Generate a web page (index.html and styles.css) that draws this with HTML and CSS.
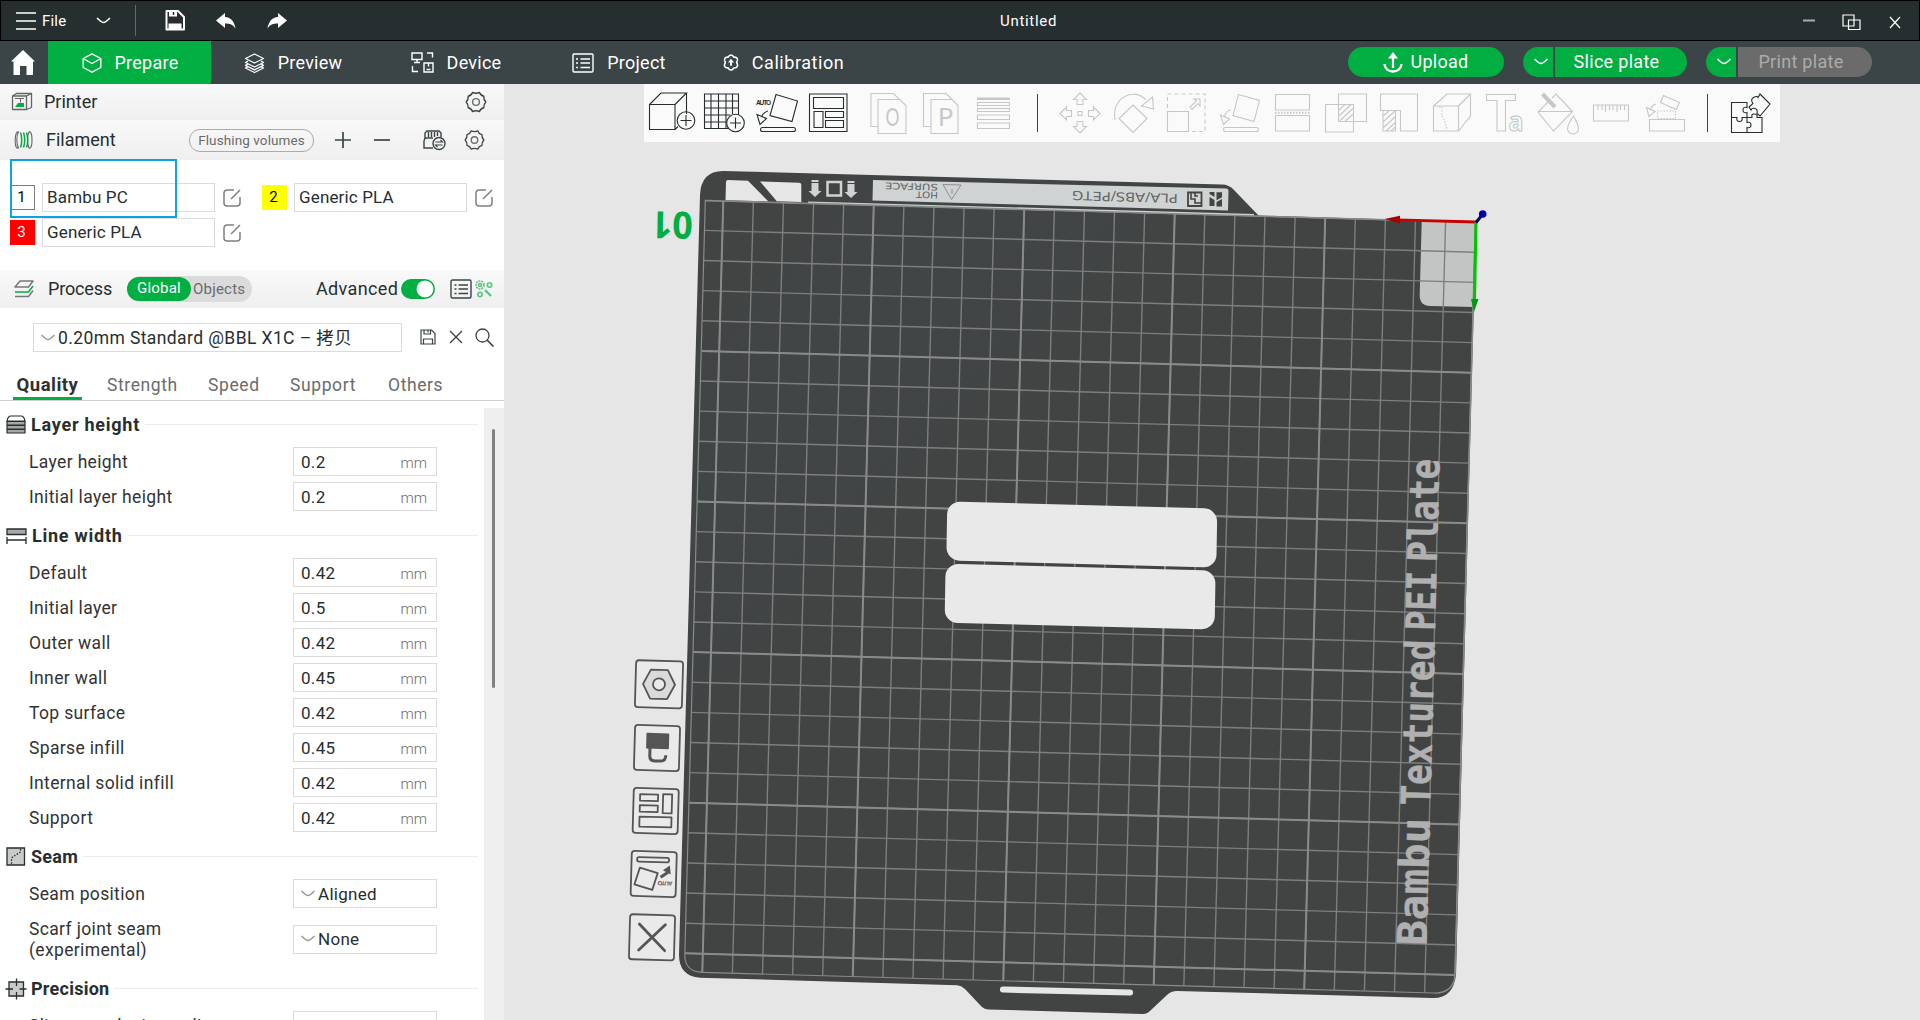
FILE: index.html
```
<!DOCTYPE html>
<html lang="en">
<head>
<meta charset="utf-8">
<title>Untitled</title>
<link rel="stylesheet" href="styles.css">
</head>
<body>
<svg class="defs" width="0" height="0" aria-hidden="true">
  <symbol id="edit" viewBox="0 0 18 18"><path d="M11 1H4a3 3 0 0 0-3 3v10a3 3 0 0 0 3 3h10a3 3 0 0 0 3-3V8M8 10l9-9" fill="none" stroke="#808080" stroke-width="1.5"/></symbol>
  <symbol id="gear" viewBox="0 0 22 22"><path d="M7.500 1.500Q11 3 14.500 1.500 15.500 4.500 18.800 5.300 18.500 8.500 20.800 11 18.500 13.500 18.800 16.700 15.500 17.500 14.500 20.500 11 19 7.500 20.500 6.500 17.500 3.200 16.700 3.500 13.500 1.200 11 3.500 8.500 3.200 5.300 6.500 4.500 7.500 1.500z" fill="none" stroke="#3b4446" stroke-width="1.400" stroke-linejoin="round"/><circle cx="11" cy="11" r="3.400" fill="none" stroke="#6b6b6b" stroke-width="1.400"/></symbol>
  <symbol id="down" viewBox="0 0 14 8"><path d="M.5 1q4.500 4.500 6.500 4.500T13.500 1" fill="none" stroke="currentColor" stroke-width="1.500"/></symbol>
</svg>

<header class="titlebar">
  <svg class="burger" width="20" height="18" viewBox="0 0 20 18"><path d="M0 1h20M0 9h20M0 17h20" stroke="#fff" stroke-width="1.600"/></svg>
  <span class="file">File</span>
  <svg class="file-down" width="15" height="8"><use href="#down"/></svg>
  <i class="rule"></i>
  <svg class="t-save" width="20" height="21" viewBox="0 0 20 21"><path d="M1.500 1h11.500l6 6v12.500h-17.500z" fill="none" stroke="#fff" stroke-width="2" stroke-linejoin="round"/><path d="M4 1h8v5.500H4zM3.500 13.500h13V20h-13z" fill="#fff"/><path d="M8.500 2v3" stroke="#262e30" stroke-width="1.500"/></svg>
  <svg class="t-undo" width="20" height="16" viewBox="0 0 20 16"><path d="M9 0v4c6 0 9.500 5 10.500 11.500C17 11.500 14 10.500 9 10.500v4.500L0 7.500z" fill="#fff"/></svg>
  <svg class="t-redo" width="20" height="16" viewBox="0 0 20 16"><path d="M11 0v4C5 4 1.500 9 .5 15.500 3 11.500 6 10.500 11 10.500v4.500l9-7.500z" fill="#fff"/></svg>
  <span class="doc">Untitled</span>
  <svg class="win" width="100" height="20" viewBox="0 0 100 20" fill="none" stroke="#fff" stroke-width="1.200"><path d="M0 9.500h12" stroke="#aaa" stroke-width="2"/><path d="M40 4h11v11H40zM45.500 9h11.500v9.500H45.500z"/><path d="M87 6l10 11M97 6L87 17"/></svg>
</header>

<nav class="tabbar">
  <div class="home"><svg width="24" height="25" viewBox="0 0 24 25"><path d="M12 0L24 11.500l-2 0V25h-6.500v-9H9v9H2.500V11.500H0z" fill="#fff"/></svg></div>
  <div class="tab active"><svg width="20" height="20" viewBox="0 0 20 20" fill="none" stroke="#fff" stroke-width="1.400" stroke-linejoin="round"><path d="M10 .8l8.800 4.700v9L10 19.200 1.200 14.500v-9zM1.200 5.500L10 10.500l8.800-5"/></svg><span>Prepare</span></div>
  <div class="tab"><svg width="21" height="20" viewBox="0 0 21 20" fill="none" stroke="#fff" stroke-width="1.300" stroke-linejoin="round"><path d="M10.500 1l9 4.500-9 4.500-9-4.500zM4 8.200L1.500 9.500l9 4.500 9-4.500L17 8.200M4 11L1.500 12.300l9 4.500 9-4.500L17 11M4 13.700L1.500 15l9 4.500 9-4.500-2.500-1.300"/></svg><span>Preview</span></div>
  <div class="tab"><svg width="23" height="21" viewBox="0 0 23 21" fill="none" stroke="#fff" stroke-width="1.400"><path d="M1 1h10v6.500H1zM6 7.500v2.500M3 10.500h6M16 1h5.500v4.500M1.500 14v5.500H7M13 11h9v9h-9zM15.500 17.500h4M17.500 11v3.500"/></svg><span>Device</span></div>
  <div class="tab"><svg width="22" height="20" viewBox="0 0 22 20" fill="none" stroke="#fff" stroke-width="1.400"><rect x="1" y="1" width="20" height="18" rx="1"/><path d="M8.500 6H18M8.500 10H18M8.500 14.500H18"/><path d="M4 6h2M4 10h2M4 14.500h2"/></svg><span>Project</span></div>
  <div class="tab"><svg width="16" height="17" viewBox="0 0 17 18" fill="none" stroke="#fff" stroke-width="1.700" stroke-linejoin="round"><path d="M5.500 3.300Q6.500 1 8.500 1t3 2.300q2.600-.3 3.600 1.400T14.500 9q1.600 2.600.6 4.300t-3.600 1.400Q10.500 17 8.500 17t-3-2.300q-2.600.3-3.600-1.400T2.500 9Q.9 6.400 1.900 4.700t3.600-1.400z"/><path d="M8.500 12.500V7" stroke-width="2"/><path d="M5.200 9L8.500 5 11.800 9z" fill="#fff" stroke="none"/></svg><span>Calibration</span></div>
  <div class="actions">
    <div class="btn upload"><svg width="20" height="21" viewBox="0 0 20 21"><path d="M1.500 12a8.500 7.500 0 0 0 17 0M10 16V5" fill="none" stroke="#fff" stroke-width="2.300"/><path d="M5 6.500L10 0l5 6.500z" fill="#fff"/></svg><span>Upload</span></div>
    <div class="split"><div class="cap"><svg width="14" height="8"><use href="#down"/></svg></div><div class="btn slice">Slice plate</div></div>
    <div class="split"><div class="cap"><svg width="14" height="8"><use href="#down"/></svg></div><div class="btn print">Print plate</div></div>
  </div>
</nav>

<main class="main">
  <aside class="side">
    <div class="bar printer">
      <svg width="22" height="20" viewBox="0 0 22 20"><path d="M1.500 4h14v13.500h-14zM1.500 4l4-2.500h15v14l-5 2M15.500 4l5-2.500" fill="none" stroke="#666" stroke-width="1.300" stroke-linejoin="round"/><path d="M4 15l3-4h6v4z" fill="#00ae42"/><path d="M4 6.500h9M9.500 6.500v4" stroke="#666" fill="none"/></svg>
      <span>Printer</span>
      <svg class="end" width="22" height="22"><use href="#gear"/></svg>
    </div>
    <div class="bar filament">
      <svg width="19" height="18" viewBox="0 0 19 18" fill="none" stroke="#00ae42" stroke-width="1.500"><path d="M6.500 1.500q2.500 7.500 0 15M9.500 1.500q2.500 7.500 0 15M12.500 1.500q2.500 7.500 0 15"/><path d="M4.500 1Q1.500 0 1.200 9t3.300 8Q2.800 14 2.800 9t1.700-8zM15 1q3-1 3 8t-3 8q-1.500-3-1.500-8T15 1z" stroke="#666" stroke-width="1.100"/></svg>
      <span>Filament</span>
      <div class="flush">Flushing volumes</div>
      <svg class="plus" width="16" height="16" viewBox="0 0 16 16"><path d="M0 8h16M8 0v16" stroke="#3b4446" stroke-width="1.700"/></svg>
      <svg class="minus" width="16" height="16" viewBox="0 0 16 16"><path d="M0 8h16" stroke="#3b4446" stroke-width="1.700"/></svg>
      <svg class="ams" width="23" height="20" viewBox="0 0 23 20" fill="none" stroke="#3b4446" stroke-width="1.400"><path d="M2 8V3l2-2h12l2 2v4M2 8L1 11v7h9M5.500 2v5M8.500 2v5M11.500 2v5M14.500 2v4M2 8h8"/><circle cx="16" cy="13.500" r="6"/><path d="M12.500 12h7l-2-2M19.500 15h-7l2 2" stroke-width="1.100"/></svg>
      <svg class="end2" width="21" height="22"><use href="#gear"/></svg>
    </div>
    <div class="spools">
      <div class="spool"><b class="sw white">1</b><div class="box">Bambu PC</div><svg width="18" height="18"><use href="#edit"/></svg></div>
      <div class="spool"><b class="sw yellow">2</b><div class="box">Generic PLA</div><svg width="18" height="18"><use href="#edit"/></svg></div>
      <div class="spool"><b class="sw red">3</b><div class="box">Generic PLA</div><svg width="18" height="18"><use href="#edit"/></svg></div>
      <div class="focus"></div>
    </div>
    <div class="bar process">
      <svg width="20" height="18" viewBox="0 0 20 18" fill="none" stroke="#777" stroke-width="1.500" stroke-linejoin="round"><path d="M6 1h13l-4.500 6H1z"/><path d="M1 12h13.500L19 6" stroke="#00ae42"/><path d="M1 16.500h13.500L19 10.500"/></svg>
      <span>Process</span>
      <div class="seg"><b>Global</b><i>Objects</i></div>
      <span class="adv">Advanced</span>
      <div class="toggle"></div>
      <svg class="list" width="22" height="20" viewBox="0 0 22 20" fill="none" stroke="#3b4446" stroke-width="1.400"><rect x="1" y="1" width="20" height="18" rx="1.500"/><path d="M8.500 6H18M8.500 10H18M8.500 14.500H18M4.500 6h2M4.500 10h2M4.500 14.500h2"/></svg>
      <svg width="18" height="18" viewBox="0 0 18 18" fill="none" stroke="#5cc483" stroke-width="1.600"><circle cx="5" cy="5" r="4" stroke-dasharray="2 .8"/><circle cx="5" cy="5" r="1.500"/><circle cx="14.500" cy="5" r="2.200"/><circle cx="5" cy="14.500" r="2.200"/><path d="M10 10l6 6" stroke-width="2.400"/></svg>
    </div>
    <div class="preset">
      <div class="box"><svg width="14" height="8"><use href="#down"/></svg><span>0.20mm Standard @BBL X1C – 拷贝</span></div>
      <svg class="p-save" width="16" height="16" viewBox="0 0 16 16" fill="none" stroke="#3b4446" stroke-width="1.200"><path d="M1 1h10.500L15 4.500V15H1zM4 1v4h6.500V1M3.500 15v-5h9v5M8 1.500v2"/></svg>
      <svg class="p-x" width="14" height="14" viewBox="0 0 14 14"><path d="M1 1l12 12M13 1L1 13" stroke="#3b4446" stroke-width="1.400"/></svg>
      <svg class="p-find" width="19" height="19" viewBox="0 0 19 19" fill="none" stroke="#3b4446" stroke-width="1.300"><circle cx="7.500" cy="7.500" r="6.500"/><path d="M12 12l6.500 6.500" stroke-width="1.700"/></svg>
    </div>
    <div class="subtabs"><b>Quality</b><span class="s2">Strength</span><span class="s3">Speed</span><span class="s4">Support</span><span class="s5">Others</span></div>
    <div class="settings">
      <div class="groups">
        <h3 class="wide"><svg width="20" height="19" viewBox="0 0 20 19" fill="#a7a7a7" stroke="#262e30" stroke-width="1.200"><path d="M1 6q1-5 4-5h10q3 0 4 5z" fill="#fff"/><path d="M1 6.500h18v3.500H1zM1 10.500h18V14H1zM1 14.500h18V18H1z"/></svg>Layer height</h3>
        <div class="row"><label>Layer height</label><div class="box val">0.2<i>mm</i></div></div>
        <div class="row"><label>Initial layer height</label><div class="box val">0.2<i>mm</i></div></div>
        <h3 class="wide"><svg width="21" height="16" viewBox="0 0 21 16" fill="none" stroke="#262e30" stroke-width="1.300"><path d="M1 1h19v5.500H1z" fill="#a7a7a7"/><path d="M1 9v7M20 9v7M1 12h19"/></svg>Line width</h3>
        <div class="row"><label>Default</label><div class="box val">0.42<i>mm</i></div></div>
        <div class="row"><label>Initial layer</label><div class="box val">0.5<i>mm</i></div></div>
        <div class="row"><label>Outer wall</label><div class="box val">0.42<i>mm</i></div></div>
        <div class="row"><label>Inner wall</label><div class="box val">0.45<i>mm</i></div></div>
        <div class="row"><label>Top surface</label><div class="box val">0.42<i>mm</i></div></div>
        <div class="row"><label>Sparse infill</label><div class="box val">0.45<i>mm</i></div></div>
        <div class="row"><label>Internal solid infill</label><div class="box val">0.42<i>mm</i></div></div>
        <div class="row"><label>Support</label><div class="box val">0.42<i>mm</i></div></div>
        <h3><svg width="20" height="19" viewBox="0 0 20 19" fill="none" stroke="#262e30" stroke-width="1.300"><path d="M1 1h17.500v17H1z" fill="#c9cbcb"/><path d="M14.500 2v3l-8 5-1 2v5" stroke-dasharray="1.500 1.500"/></svg>Seam</h3>
        <div class="row"><label>Seam position</label><div class="box sel"><svg width="14" height="8"><use href="#down"/></svg>Aligned</div></div>
        <div class="row tall"><label>Scarf joint seam<br>(experimental)</label><div class="box sel"><svg width="14" height="8"><use href="#down"/></svg>None</div></div>
        <h3><svg width="20" height="20" viewBox="0 0 20 20" fill="none" stroke="#262e30" stroke-width="1.300"><path d="M3 3h14.500v14H3z" fill="#c9cbcb"/><path d="M10.500-.5V7M10.500 13v7.500M-.5 10H7M13.500 10h7"/></svg>Precision</h3>
        <div class="row"><label>Slice gap closing radius</label><div class="box val">0.049<i>mm</i></div></div>
      </div>
      <div class="track"><div class="thumb"></div></div>
    </div>
  </aside>

  <section class="view">
    <svg class="scene" width="1416" height="936" viewBox="504 84 1416 936">
      <defs>
        <linearGradient id="sheen" x1="0" y1="0" x2="1" y2="1"><stop offset="0" stop-color="#424443"/><stop offset=".08" stop-color="#424443"/><stop offset=".2" stop-color="#404546"/><stop offset=".38" stop-color="#424443"/></linearGradient>
        <clipPath id="bed"><path d="M0 0H771V750Q771 771.500 750 771.500H18Q0 771.500 0 753.500Z"/></clipPath>
      </defs>
      <path d="M700 195Q701 171 723 171L1222 184.500Q1229 184.500 1234 190L1258.500 215.500 1476 222 1456 975Q1453 999 1432 998L1177 991Q1171 991 1167 995L1151 1010Q1147 1014.500 1142 1014L989 1009.500Q984 1009.500 980 1005L965 989Q961 985.500 957 985.200L700 977.700Q679 976 679 955Z" fill="url(#sheen)"/>
      <g fill="#e6e6e6"><path d="M726 182q0-2 2-2l20 .8 20.500 20.700-43-1.200zM760 181.500l39 1.200q2.300 0 2.300 2V202l-24.500-.7z"/></g>
      <path d="M808 202.500L1254 215" stroke="#d0d3d3" stroke-width="2"/>
      <path d="M873 180L1226 188.500q2.500 0 2.500 2.500l-.5 19.500L872.500 200.500z" fill="#d0d3d3"/>
      <g fill="#d0d3d3"><path d="M811.500 180h7v2h-7zM811.500 183h7v8h3l-6.500 6-6.500-6h3zM847.500 181h7v2h-7zM847.500 184h7v8h3l-6.500 6-6.500-6h3z"/></g>
      <path d="M827.500 182h13.500v13.500h-13.500z" fill="none" stroke="#d0d3d3" stroke-width="2.500"/>
      <g fill="#626563" font-family="DejaVu Sans">
        <text transform="translate(938 185) rotate(181.600)" font-size="9" textLength="53" lengthAdjust="spacingAndGlyphs" y="1">SURFACE</text>
        <text transform="translate(938 193) rotate(181.600)" font-size="9" textLength="22" lengthAdjust="spacingAndGlyphs" y="1">HOT</text>
        <text transform="translate(1178 194.500) rotate(181.600)" font-size="12.500" textLength="106" lengthAdjust="spacingAndGlyphs" y=".5">PLA/ABS/PETG</text>
      </g>
      <path d="M943 184.500l18 .5-9.500 14.500z" fill="none" stroke="#8c8f8d"/><path d="M952 189v5" stroke="#8c8f8d"/>
      <path d="M1188 192.500h13.500v13.500H1188z" fill="none" stroke="#424443" stroke-width="1.800"/><path d="M1191 193v6h4v4h6M1195 193v3h3" fill="none" stroke="#424443" stroke-width="1.600"/>
      <path d="M1209.500 192l5 .1v5l-5-3zM1209.500 197l5 3v6h-5zM1216.500 192.300h5.500v5l-5.500 3zM1216.500 202l5.500-3v7.500h-5.500z" fill="#424443"/>

      <g transform="matrix(.9992 .0283 -.0272 1 705.300 200.300)">
        <path d="M717 0h54v85h-43q-11 0-11-11z" fill="#c3c5c4"/>
        <g clip-path="url(#bed)" fill="none">
          <path d="M771 385.750H0" stroke="#7c7f7d" stroke-width="771.500" stroke-dasharray="1.400 28.720" stroke-dashoffset=".7"/>
          <path d="M385.500 0V771.500" stroke="#7c7f7d" stroke-width="771" stroke-dasharray="1.400 28.720" stroke-dashoffset=".7"/>
          <path d="M771 385.750H0" stroke="#888b89" stroke-width="771.500" stroke-dasharray="2 148.600" stroke-dashoffset="1"/>
          <path d="M385.500 0V771.500" stroke="#888b89" stroke-width="771" stroke-dasharray="2 148.600" stroke-dashoffset="1"/>
        </g>
        <path d="M0 0H771V750Q771 771.500 750 771.500H18Q0 771.500 0 753.500Z" fill="none" stroke="#888b89" stroke-width="1.200"/>
      </g>

      <g fill="#b0b0b0" stroke="#b0b0b0" stroke-width=".4" font-family="DejaVu Sans Mono" font-weight="bold" font-size="41" transform="translate(1426.500 945) rotate(-88.450)">
        <text x="-1" y="0" textLength="128" lengthAdjust="spacingAndGlyphs">Bambu</text>
        <text x="139" y="0" textLength="166" lengthAdjust="spacingAndGlyphs">Textured</text>
        <text x="314" y="0" textLength="60" lengthAdjust="spacingAndGlyphs">PEI</text>
        <text x="383" y="0" textLength="103" lengthAdjust="spacingAndGlyphs">Plate</text>
      </g>

      <g fill="#e9e9e9">
        <rect width="270" height="59" rx="13" transform="matrix(1 .0275 -.0170 1 947.300 501.300)"/>
        <rect width="270" height="59" rx="13" transform="matrix(1 .0250 -.0170 1 945.600 563.700)"/>
      </g>
      <path d="M1003 989.500L1130 992.500" stroke="#e6e6e6" stroke-width="6.200" stroke-linecap="round"/>

      <path d="M1475.500 222L1397 219.800" stroke="#c80000" stroke-width="2.800"/><path d="M1384.500 219L1400 215.800V223.500z" fill="#a80000"/>
      <path d="M1476 222L1474.500 302" stroke="#00c400" stroke-width="3"/><path d="M1471 299h7.500L1474 312z" fill="#009a10"/>
      <path d="M1476 222.500L1482 215" stroke="#000070" stroke-width="3"/><circle cx="1482.700" cy="214" r="3.800" fill="#0000a8"/>

      <text transform="translate(693 212) rotate(181)" font-family="Open Sans" font-weight="bold" font-size="37.500" fill="#00ae42" textLength="41" lengthAdjust="spacingAndGlyphs">01</text>

      <g fill="none" stroke="#555" stroke-width="1.800" stroke-linejoin="round">
        <g transform="translate(659 684.300) rotate(1.600)"><rect x="-23.500" y="-23.500" width="47" height="47" rx="3" fill="#eaeaea"/><path d="M-8.500-14.500h17L16 0 8.500 14.500h-17L-16 0z" fill="#dadada"/><circle r="6" fill="#eaeaea"/></g>
        <g transform="translate(657 748) rotate(1.600)"><rect x="-22.500" y="-22.500" width="45" height="45" rx="3" fill="#eaeaea"/><path d="M-10-14H11V0H-10z" fill="#555"/><path d="M-7 0v8q0 5 5 5h6q5 0 5-6" stroke-width="3"/></g>
        <g transform="translate(655.700 811) rotate(1.600)"><rect x="-22.500" y="-22.500" width="45" height="45" rx="3" fill="#eaeaea"/><path d="M-16-16.500H2v6.500H-16zM-16-5.500H2V1H-16zM7-17h9V2H7zM-16 6H16V16H-16z"/></g>
        <g transform="translate(653.700 874) rotate(1.600)"><rect x="-22.500" y="-22.500" width="45" height="45" rx="3" fill="#eaeaea"/><rect x="-17" y="-16.500" width="32" height="4.500" rx="2"/><path d="M-14-6L4-1-1 16l-18-5z"/><path d="M7 3l7-5" stroke-width="3"/><path d="M9-4l7-5 1 9z" fill="#555" stroke="none"/><text transform="translate(19 7) rotate(180)" font-family="Liberation Sans" font-size="6" font-weight="bold" fill="#555" stroke="none" textLength="15">AUTO</text></g>
        <g transform="translate(652 937.300) rotate(1.600)"><rect x="-22.500" y="-22.500" width="45" height="45" rx="3" fill="#eaeaea"/><path d="M-13-13L13 13M13-13L-13 13" stroke-width="2.800" stroke-linecap="round"/></g>
      </g>
    </svg>

    <div class="tools">
      <svg viewBox="645 84 53 58"><path d="M649.500 104.500h25.500V129.500h-25.500zM649.500 104.500L661 93h25.500L675 104.500M686.500 93v21M675 129.500l3-3"/><circle cx="686" cy="120.500" r="8.800"/><path d="M680.500 120.500h11M686 115v11"/></svg>
      <svg viewBox="698 84 53 58"><path d="M704.500 94h34v34.500h-34zM711 94v34.500M718.500 94v34.500M726 94v34.500M732.500 94v20M704.500 101h34M704.500 108h34M704.500 115h26M704.500 122h22"/><circle cx="735.500" cy="123" r="8.800" fill="#fafafa"/><path d="M730 123h11M735.500 117.500v11"/></svg>
      <svg viewBox="751 84 53 58"><path d="M776 94.500l21.500 6.500-5.500 20.500-22-6z"/><rect x="760.500" y="127.500" width="35" height="4" rx="2"/><path d="M768 111q-4.500 1-6.500 6M757 114.500l9.500 4-6.500 6z"/><text x="756" y="105" font-family="Liberation Sans" font-size="6.500" font-weight="bold" textLength="15" class="solid">AUTO</text></svg>
      <svg viewBox="804 84 53 58"><path d="M809.500 94h37.500v37.500h-37.500zM813.500 97.500h30v11h-30zM814 111.500h9v16h-9zM825.500 111.500h18v6h-18zM825.500 120.500h18v7h-18z"/></svg>
      <svg class="dim g1" viewBox="862 84 53 58"><path d="M877.500 126.500h-6.500V93.500h22.500l6 6"/><path d="M878 99.500h22l6 6v28h-28z"/><text x="892.500" y="125.500" text-anchor="middle" font-family="Lato" font-size="25" textLength="14" lengthAdjust="spacingAndGlyphs" class="solid">O</text></svg>
      <svg class="dim" viewBox="915 84 53 58"><path d="M930.500 126.500h-7V93.500h22.500l6 6"/><path d="M931 99.500h21l6 6v28h-27z"/><text x="945.500" y="125.500" text-anchor="middle" font-family="Lato" font-size="25" class="solid">P</text></svg>
      <svg class="dim" viewBox="968 84 53 58"><path d="M977 98.500h33M977 99h33" stroke-width="2"/><path d="M977.500 102.500h32v3h-32zM977.500 108.500h32v3h-32zM977.500 115h32v4.500h-32zM977.500 123h32v5.500h-32z"/></svg>
      <i class="sep a"></i>
      <svg class="dim" viewBox="1054 84 53 58"><path d="M1078 111.500h4v4h-4zM1080 93l6.500 6.500h-3.500v5h-6v-5h-3.500zM1080 133l6.500-6.500h-3.500v-5h-6v5h-3.500zM1060 113.500l6.500-6.500v3.500h5v6h-5v3.500zM1100 113.500l-6.500-6.500v3.500h-5v6h5v3.500z"/></svg>
      <svg class="dim" viewBox="1107 84 53 58"><path d="M1133 105l14 13.500-14 14-14-14zM1115 119.500C1111 97 1135 87 1146 100M1152.500 97l1 12-12-3z"/></svg>
      <svg class="dim" viewBox="1160 84 53 58"><path d="M1167.500 111.500h21v20h-21z"/><path d="M1167.500 108V94h37.500v37.500h-15" stroke-dasharray="4 3"/><path d="M1190 107l6.500-6-2.500-2h6v7l-2-2.500-6 6z"/></svg>
      <svg class="dim" viewBox="1213 84 53 58"><path d="M1238.500 94.500l21 6-5.500 21-21-6z"/><rect x="1223.500" y="127.500" width="35" height="4" rx="2"/><path d="M1231 110q-5 1-6.500 6M1220.500 115l9 4-6 5.500z"/></svg>
      <svg class="dim" viewBox="1266 84 53 58"><path d="M1275.500 94.500h34v15.500h-34zM1275.500 115.500h34V131h-34z"/><path d="M1275 112.700h35" stroke-dasharray="1.500 1.500" stroke-width="2"/></svg>
      <svg class="dim" viewBox="1319 84 53 58"><path d="M1338.500 94h28v27.500h-28zM1325.500 104.500h28v27.500h-28zM1339 110l6-5.500M1339 116l12-11.500M1340 120.500l13-12M1345 121l8.500-7"/></svg>
      <svg class="dim" viewBox="1372 84 53 58"><path d="M1380.500 94h37v37h-17V110.500h-20zM1383 110.500h12.500V131H1383zM1383 116l6-5.500M1383 122l12-11M1383 128l12-11M1386 131l9.500-8.500M1391 131l4.500-4"/></svg>
      <svg class="dim" viewBox="1425 84 53 58"><path d="M1433.500 106h25v25h-25zM1433.500 106l13.500-12h23.500l-12 12M1470.500 94v22l-12 15"/><path d="M1439 107h3v8l3 7 2 8" stroke-dasharray="1.500 1.500"/></svg>
      <svg class="dim" viewBox="1478 84 53 58"><path d="M1486.500 94.500h29v6h-10v30.500h-8.500v-30.500h-10.500z"/><text x="1508.500" y="131" font-family="Open Sans" font-weight="bold" font-size="26" textLength="15" lengthAdjust="spacingAndGlyphs">a</text></svg>
      <svg class="dim" viewBox="1531 84 53 58"><path d="M1552 98l4-4 16.500 17.500L1553.500 131 1538 112l11-11M1538 111.500h34M1573.500 116q5 9 5 12.500a5.500 5.500 0 0 1-11 0q0-3.500 6-12.500z"/><path d="M1542.500 94l12.500 13" stroke-width="4"/></svg>
      <svg class="dim" viewBox="1584 84 53 58"><path d="M1593.500 105h35v16h-35zM1598 105v5M1602 105v5M1605.500 105v7M1609.500 105v5M1613 105v5M1617 105v7M1620.500 105v5M1624.500 105v5"/></svg>
      <svg class="dim" viewBox="1637 84 53 58"><path d="M1649.500 119.500h35V131h-35zM1663.500 95.500l16 7-3.500 7-15.500-7zM1656 104q-4 1-6 6M1646.500 107.500l8.500 4-6 5z"/><path d="M1657.500 111h18v7.500h-18z" stroke-dasharray="1.500 1.500"/></svg>
      <i class="sep b"></i>
      <svg viewBox="1724 84 53 58"><path d="M1731.500 102.500h15.500v5q-4-1-4 2.500t4 2.500v5h-5q1 4-2.500 4t-2.500-4h-5.500zM1731.500 117.500V132.500h15.500v-5q4 1 4-2.500t-4-2.500v-5h5q-1-4 2.500-3.500t2.500 3.500h5V132.500H1747M1749 107l4-3.500q-3-4 .5-6t4.500 0l2-3.500 10 10-10 12-3-2.500q1-4-2-5t-4 1.500z"/></svg>
    </div>
  </section>
</main>
</body>
</html>
```
FILE: styles.css
```
* { box-sizing: border-box; }
body { margin: 0; width: 1920px; height: 1020px; overflow: hidden; display: flex; flex-direction: column; font: 17.5px/20px Roboto, "Noto Sans CJK SC", sans-serif; color: #262e30; background: #e6e6e6; }
i { font-style: normal; }
svg { flex: none; overflow: visible; display: block; }
.defs { position: absolute; }

.titlebar { flex: none; height: 41px; background: #262e30; border: 1px solid #000; display: flex; align-items: center; color: #fff; position: relative; padding-left: 15px; font-size: 15px; }
.file { margin-left: 6px; width: 25px; letter-spacing: .2px; }
.file-down { margin-left: 29px; }
.rule { width: 1px; height: 31px; background: #63696b; margin-left: 24px; }
.t-save { margin-left: 29px; }
.t-undo { margin-left: 31px; }
.t-redo { margin-left: 31px; }
.doc { margin-left: 713px; width: 60px; letter-spacing: .7px; }
.win { margin-left: auto; margin-right: 16px; }

.tabbar { flex: none; height: 43px; background: #3b4446; display: flex; align-items: center; color: #fff; }
.home { width: 48px; display: flex; justify-content: center; padding-right: 2px; }
.tab { width: 163px; height: 43px; display: flex; align-items: center; justify-content: center; gap: 13px; font-size: 18px; letter-spacing: .25px; padding-left: 1px; }
.tab:nth-child(6) { letter-spacing: .55px; padding-left: 4px; }
.tab.active { background: #00ae42; }
.actions { margin-left: auto; margin-right: 48px; display: flex; gap: 19px; margin-top: -1px; }
.btn { height: 30px; background: #00ae42; display: flex; align-items: center; justify-content: center; font-size: 18px; letter-spacing: .3px; }
.upload { width: 156px; border-radius: 15px; gap: 7px; }
.split { display: flex; gap: 2px; }
.cap { width: 30px; height: 30px; background: #00ae42; border-radius: 15px 0 0 15px; display: flex; align-items: center; justify-content: center; padding-left: 5px; }
.slice { width: 132px; border-radius: 0 15px 15px 0; padding-right: 9px; }
.print { width: 134px; border-radius: 0 15px 15px 0; background: #6b6b6b; color: #acacac; padding-right: 8px; }

.main { flex: 1; min-height: 0; display: flex; }
.side { width: 504px; background: #fff; display: flex; flex-direction: column; overflow: hidden; }
.bar { flex: none; display: flex; align-items: center; background: linear-gradient(#f9f9f9, #efefef); font-size: 18px; }
.printer { height: 36px; padding-left: 11px; }
.printer span { margin-left: 11px; }
.end { margin-left: auto; margin-right: 17px; }
.filament { height: 40px; padding-left: 14px; }
.filament span { margin-left: 13px; width: 143px; }
.flush { width: 125px; height: 23px; border: 1px solid #ababab; border-radius: 11px; font-size: 13.5px; line-height: 20px; letter-spacing: .1px; text-align: center; color: #6b6b6b; }
.plus { margin-left: 21px; }
.minus { margin-left: 23px; }
.ams { margin-left: 33px; }
.end2 { margin-left: 18px; }
.spools { flex: none; height: 110px; padding: 23px 0 0 10px; display: grid; grid-template-columns: 252px 252px; grid-auto-rows: 29px; row-gap: 6px; align-content: start; position: relative; }
.spool { display: flex; align-items: center; }
.spool svg { margin-left: 8px; }
.sw { width: 25px; height: 25px; font: 15px/24px Roboto, sans-serif; text-align: center; margin-right: 7px; padding-right: 2px; }
.white { border: 1px solid #7c7c7c; line-height: 22px; color: #000; }
.yellow { background: #ff0; color: #000; }
.red { background: #f00; color: #fff; }
.box { flex: none; height: 29px; border: 1px solid #dbdbdb; background: #fff; display: flex; align-items: center; }
.spool .box { width: 173px; padding: 0 0 2px 4px; font-size: 17px; letter-spacing: .15px; }
.focus { position: absolute; left: 10px; top: -1px; width: 167px; height: 59px; border: 2px solid #0ca3e6; }
.process { height: 38px; padding-left: 14px; }
.process > span { margin-left: 14px; width: 79px; letter-spacing: -.15px; }
.seg { width: 125px; height: 26px; border-radius: 13px; background: #dbdbdb; display: flex; align-items: center; font-size: 15px; letter-spacing: .2px; }
.seg b { width: 64px; height: 24px; line-height: 23px; border-radius: 12px; background: #00ae42; color: #fff; font-weight: 400; text-align: center; }
.seg i { color: #6b6b6b; padding-left: 2px; line-height: 23px; }
.process .adv { margin-left: 64px; width: 85px; letter-spacing: .35px; }
.toggle { width: 34px; height: 20px; border-radius: 10px; background: radial-gradient(circle at 24px 10px, #fff 8px, #00ae42 8.8px); }
.list { margin: 0 3px 0 15px; }
.preset { flex: none; padding: 15px 0 0 33px; height: 59px; display: flex; color: #262e30; }
.preset .box { width: 369px; padding-left: 7px; }
.preset .box svg, .sel svg { color: #9b9b9b; }
.preset .box span { margin-left: 3px; white-space: nowrap; letter-spacing: .4px; }
.p-save { margin: 6px 0 0 18px; }
.p-x { margin: 7px 0 0 13px; }
.p-find { margin: 5px 0 0 12px; }
.subtabs { flex: none; height: 34px; border-bottom: 1px solid #ceced0; position: relative; display: flex; color: #6b6b6b; padding-left: 13px; line-height: 37px; letter-spacing: .6px; }
.subtabs b { width: 69px; height: 33px; text-align: center; color: #303030; border-bottom: 3px solid #00ae42; font-size: 18.5px; letter-spacing: .5px; }
.s2 { margin-left: 25px; width: 101px; }
.s3 { width: 82px; }
.s4 { width: 98px; }
.settings { flex: 1; min-height: 0; display: flex; overflow: hidden; }
.groups { width: 484px; padding-top: 2px; }
.groups h3 { margin: 2px 6px 0 0; height: 39px; display: flex; align-items: center; font-size: 18px; font-weight: 700; gap: 5px; padding-left: 6px; letter-spacing: .25px; }
.groups .wide { letter-spacing: .75px; }
.groups h3::after { content: ""; flex: 1; height: 1px; background: #ececec; }
.row { height: 35px; display: flex; align-items: center; padding-left: 29px; }
.row label { width: 264px; color: #333; line-height: 21px; letter-spacing: .35px; padding-top: 1px; }
.row .box { width: 144px; padding-left: 7px; padding-right: 9px; justify-content: space-between; font-size: 17px; letter-spacing: .3px; }
.row i { color: #6b6b6b; font-size: 15px; font-weight: 300; padding-top: 2px; letter-spacing: 0; }
.row .sel { justify-content: flex-start; gap: 3px; padding-left: 7px; }
.tall { height: 56px; }
.track { width: 20px; margin-top: 7px; background: #efefef; padding: 21px 0 0 8px; }
.thumb { width: 3px; height: 259px; border-radius: 2px; background: #818181; }

.view { flex: 1; position: relative; }
.scene { position: absolute; left: 0; top: 0; }
.tools { position: relative; margin-left: 140px; width: 1136px; height: 58px; background: #fafafa; display: flex; align-items: center; padding-left: 1px; }
.tools svg { width: 53px; height: 58px; fill: none; stroke: #262e30; stroke-width: 1.1; }
.tools .dim { stroke: #c6c8c8; }
.tools .solid { fill: #262e30; stroke: none; }
.tools .dim .solid { fill: #c6c8c8; }
.tools .g1 { margin-left: 5px; }
.sep { width: 1px; height: 38px; background: #3b4446; }
.a { margin: 0 16px; }
.b { margin: 0 16px 0 17px; }
```
